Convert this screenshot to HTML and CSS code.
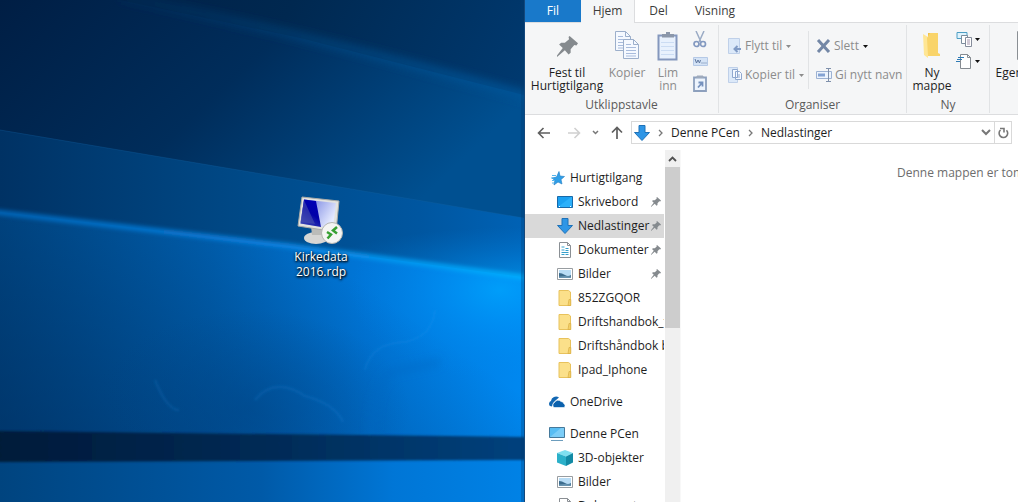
FILE: index.html
```html
<!DOCTYPE html>
<html lang="nb">
<head>
<meta charset="utf-8">
<title>Nedlastinger</title>
<link rel="stylesheet" href="styles.css">
</head>
<body>
<svg class="defs" aria-hidden="true">
  <symbol id="pin" viewBox="0 0 20 20"><path d="M12 0 20 7 18.500 9 16.500 8.500 13 12.500 13 16 11 17.500 7.500 13.500 0 20 0 18.500 5.500 11.500 2 8 4 6.500 7.500 6.500 11.500 3 11 1Z" fill="#858a8e"/></symbol>
  <symbol id="folder" viewBox="0 0 16 16"><path d="M2 .5h9.500l2 1.500v13.500H2z" fill="#fbe08a" stroke="#e8c25c"/><path d="M12 9.500h1.800v6H11z" fill="#f4d067" stroke="#d9ae45" stroke-width=".7"/></symbol>
  <symbol id="down" viewBox="0 0 16 16"><path d="M5 .5h6v7h4.500L8 15.500.5 7.500H5z" fill="#2f96e6" stroke="#1f72b8"/></symbol>
  <symbol id="doc" viewBox="0 0 16 16"><path d="M2.500.5h8l3 3v12h-11z" fill="#fff" stroke="#8a8f94"/><path d="M10.500.5v3h3" fill="none" stroke="#8a8f94"/><path d="M4.500 5h3M8.500 6.500h3M4.500 8h3M8.500 8.500h3M4.500 10.500h7M4.500 12.500h3M8.500 12.500h3" stroke="#35a0cc"/></symbol>
  <symbol id="pic" viewBox="0 0 16 16"><path d="M.5 2.500h15v11H.5z" fill="#fff" stroke="#989da1"/><path d="M2 4h12v8H2z" fill="#b8dcf5"/><path d="M2 7q3 0 6 2t6 0v3H2z" fill="#3c6c8d"/><path d="M2 10.500l6-.5 6 .5V12H2z" fill="#6793b0"/></symbol>
  <symbol id="page" viewBox="0 0 16 20"><path d="M.5.500h10l5 5v14H.5z" fill="#f5f9ff" stroke="#9cafcb"/><path d="M10.500.5v5h5" fill="none" stroke="#9cafcb"/><path d="M3 5.500h5M3 8.500h10M3 11.500h10M3 14.500h10M3 17h10" stroke="#a9bcdc"/></symbol>
  <symbol id="caret" viewBox="0 0 5 3"><path d="M0 0h5L2.500 3z" fill="currentColor"/></symbol>
</svg>

<main class="desktop">
  <svg class="wallpaper" viewBox="0 0 524 502" preserveAspectRatio="none" aria-hidden="true">
    <defs>
      <linearGradient id="sky" x1="0" y1="0" x2="1" y2="0.500"><stop offset="0" stop-color="#001d42"/><stop offset=".45" stop-color="#002850"/><stop offset="1" stop-color="#003f7a"/></linearGradient>
      <linearGradient id="upper" x1="0" y1="0" x2="1" y2=".45"><stop offset="0" stop-color="#001e44"/><stop offset=".5" stop-color="#002d5b"/><stop offset="1" stop-color="#005091"/></linearGradient>
      <linearGradient id="mid" x1="0" y1="0" x2="1" y2="0"><stop offset="0" stop-color="#003264"/><stop offset=".5" stop-color="#004b8a"/><stop offset=".8" stop-color="#0056a0"/><stop offset="1" stop-color="#0062b5"/></linearGradient>
      <linearGradient id="low" x1="0" y1="0" x2="1" y2="0"><stop offset="0" stop-color="#004b8b"/><stop offset=".4" stop-color="#0060b0"/><stop offset=".7" stop-color="#0076d8"/><stop offset="1" stop-color="#0088f0"/></linearGradient>
      <linearGradient id="shade" gradientUnits="userSpaceOnUse" x1="300" y1="240" x2="120" y2="500"><stop offset="0" stop-color="#002450" stop-opacity="0"/><stop offset="1" stop-color="#002450" stop-opacity=".5"/></linearGradient>
      <linearGradient id="floor" x1="0" y1="0" x2="1" y2="0"><stop offset="0" stop-color="#00447f"/><stop offset=".5" stop-color="#005aa8"/><stop offset=".75" stop-color="#0076d6"/><stop offset="1" stop-color="#0082e6"/></linearGradient>
      <linearGradient id="bar" x1="0" y1="0" x2="1" y2="0"><stop offset="0" stop-color="#001a39"/><stop offset=".5" stop-color="#002a55"/><stop offset="1" stop-color="#00427e"/></linearGradient>
      <linearGradient id="ray" x1="0" y1="0" x2="1" y2="0"><stop offset="0" stop-color="#0067bb"/><stop offset=".5" stop-color="#0b82e2"/><stop offset="1" stop-color="#00b0ff"/></linearGradient>
      <linearGradient id="beam" x1="0" y1="0" x2="1" y2="0"><stop offset="0" stop-color="#05457d" stop-opacity=".15"/><stop offset="1" stop-color="#075599"/></linearGradient>
      <radialGradient id="glow"><stop offset="0" stop-color="#00a8ff"/><stop offset=".4" stop-color="#0098fa" stop-opacity=".6"/><stop offset="1" stop-color="#0085e8" stop-opacity="0"/></radialGradient>
      <radialGradient id="dim"><stop offset="0" stop-color="#00407e" stop-opacity=".4"/><stop offset="1" stop-color="#00407e" stop-opacity="0"/></radialGradient>
      <filter id="b2" x="-10%" y="-50%" width="120%" height="200%"><feGaussianBlur stdDeviation="2"/></filter>
      <filter id="b5" x="-20%" y="-50%" width="140%" height="200%"><feGaussianBlur stdDeviation="4"/></filter>
      <filter id="b1"><feGaussianBlur stdDeviation="1"/></filter>
      <clipPath id="above"><path d="M0 130 524 218V277L290 246 0 212z"/></clipPath>
      <clipPath id="below"><path d="M0 212 290 246 524 277V437H0z"/></clipPath>
    </defs>
    <path d="M0 0h524v502H0z" fill="url(#sky)"/>
    <path d="M0 0h120L300 38 524 95v130H0z" fill="url(#upper)"/>
    <path d="M120-3Q300 32 540 100" fill="none" stroke="url(#beam)" stroke-width="9" filter="url(#b5)"/>
    <path d="M0 130 524 218v70H0z" fill="url(#mid)"/>
    <path d="M0 130 524 218" stroke="#1467a8" stroke-opacity=".3"/>
    <g clip-path="url(#above)"><ellipse cx="524" cy="277" rx="220" ry="50" fill="url(#glow)" opacity=".5"/></g>
    <path d="M0 212 290 246 524 277v225H0z" fill="url(#low)"/>
    <path d="M0 212 290 246 524 277v225H0z" fill="url(#shade)"/>
    <ellipse cx="250" cy="410" rx="160" ry="100" fill="url(#dim)"/>
    <g clip-path="url(#below)"><ellipse cx="500" cy="290" rx="150" ry="90" fill="url(#glow)" opacity=".7"/></g>
    <path d="M372 450q-2-60 18-78l50-10" fill="none" stroke="#0068c4" stroke-opacity=".4" stroke-width="8" filter="url(#b5)"/>
    <path d="M-5 212 290 246 530 278" fill="none" stroke="url(#ray)" stroke-width="5" filter="url(#b2)"/>
    <path d="M365 370q6-27 40-28 28-6 30-32M155 380q12 30 24 30M255 400q20-24 50-4 30 8 38 26" fill="none" stroke="#2c9af0" stroke-opacity=".12" stroke-width="3" filter="url(#b1)"/>
    <path d="M0 455h524v47H0z" fill="url(#floor)"/>
    <path d="M-5 431 530 437v23L-5 462z" fill="url(#bar)" filter="url(#b1)"/>
    <path d="M521 0h3v502h-3z" fill="#003a70" opacity=".3"/>
  </svg>

  <button class="shortcut" type="button">
    <svg width="50" height="50" viewBox="0 0 50 50" aria-hidden="true">
      <defs><linearGradient id="scr" x1="0" y1="0" x2="1" y2=".5"><stop offset="0" stop-color="#5868d8"/><stop offset="1" stop-color="#e6ebff"/></linearGradient>
      <linearGradient id="scr2" x1="0" y1="1" x2=".5" y2="0"><stop offset="0" stop-color="#4854b4"/><stop offset=".6" stop-color="#0202a8"/><stop offset="1" stop-color="#0000b4"/></linearGradient></defs>
      <ellipse cx="20" cy="43" rx="12" ry="6" fill="#d6d6d4"/><path d="M15 31h11l1 9H16z" fill="#bbbcb9"/>
      <path d="M6 2 43 6 40 37 2 31z" fill="#e3e3df" stroke="#a9aaa7"/>
      <path d="M8 4.500 40 8 37 33.500 4.500 28.500z" fill="url(#scr)"/><path d="M8 4.500 20 6 25 32 4.500 28.500z" fill="url(#scr2)"/><path d="M8 5 19 29 4.500 27z" fill="#4e58b0" opacity=".55"/>
      <circle cx="36" cy="38" r="10.500" fill="#f5f5f3" stroke="#b5b6b2"/>
      <path d="M31 37l4 2.500-3.500 4M41 32l-4 3.500 4 3" fill="none" stroke="#38a032" stroke-width="2.500"/>
    </svg>
    <span>Kirkedata<br>2016.rdp</span>
  </button>

  <section class="window" aria-label="Nedlastinger">
    <nav class="tabs">
      <button class="tab file" type="button">Fil</button>
      <button class="tab active" type="button">Hjem</button>
      <button class="tab" type="button">Del</button>
      <button class="tab view" type="button">Visning</button>
    </nav>

    <div class="ribbon">
      <div class="group clip">
        <div class="tools">
          <button class="big wide" type="button"><span class="pic"><svg width="21" height="21"><use href="#pin"/></svg></span>Fest til<br>Hurtigtilgang</button>
          <button class="big copy off" type="button"><span class="pic"><svg width="25" height="29" viewBox="0 0 25 29"><use href="#page" width="16" height="20"/><use href="#page" x="8" y="8" width="16" height="20"/></svg></span>Kopier</button>
          <button class="big slim off" type="button"><span class="pic"><svg width="22" height="30" viewBox="0 0 22 30"><path d="M1.500 4.500h18v24h-18z" fill="#e8f1fd" stroke="#8497bd" stroke-width="2"/><path d="M5 6.500V3h4V1h4v2h4v3.500z" fill="#8b97aa"/><path d="M4 11.500h13M4 15.500h13M4 19.500h13M4 23.500h13" stroke="#cbdcf3"/></svg></span>Lim<br>inn</button>
          <div class="small-tools">
            <button type="button" aria-label="Klipp ut"><svg width="14" height="17" viewBox="0 0 14 17"><path d="M3 0l5 11M11 0L6 11" stroke="#9aabc5" stroke-width="1.500"/><circle cx="3.500" cy="13" r="2.500" fill="none" stroke="#8399c0" stroke-width="1.700"/><circle cx="10" cy="13" r="2.500" fill="none" stroke="#8399c0" stroke-width="1.700"/></svg></button>
            <button type="button" aria-label="Kopier bane"><svg width="15" height="9" viewBox="0 0 15 9"><path d="M.5.5h14v8H.5z" fill="#d4e3f6" stroke="#b5c9e6"/><path d="M2 2l1.500 4L5 3l1.500 3L7.500 3M8.500 6h1M10.500 6h1M12.500 6h1" fill="none" stroke="#60789f"/></svg></button>
            <button type="button" aria-label="Lim inn snarvei"><svg width="14" height="17" viewBox="0 0 14 17"><path d="M1 2.500h12V16H1z" fill="#edf4fd" stroke="#8da0bd" stroke-width="1.800"/><path d="M4 3V1h6v2" fill="#9eaabc" stroke="#9eaabc"/><path d="M5 12.500 8.500 8.500M5.500 7.500h4v4" fill="none" stroke="#7591bd" stroke-width="1.800"/></svg></button>
          </div>
        </div>
        <h2>Utklippstavle</h2>
      </div>

      <div class="group organise">
        <div class="tools">
          <div class="pair">
            <button class="line off" type="button"><svg width="14" height="16" viewBox="0 0 14 16"><path d="M.5.500h11v15H.5z" fill="#dce9f9" stroke="#bfd0e9"/><path d="M13 11H7M9.500 8l-3 3 3 3" fill="none" stroke="#819bc5" stroke-width="2"/></svg>Flytt til<svg class="caret"><use href="#caret"/></svg></button>
            <button class="line off" type="button"><svg width="14" height="16" viewBox="0 0 14 16"><path d="M.5.500h9v15h-9z" fill="#dce9f9" stroke="#bfd0e9"/><path d="M4.500 2.500h5v8h-5zM7.500 4.500h4l2 2v6h-6z" fill="#f5f9ff" stroke="#8fa8cf"/><path d="M9 8h3M9 10h3" stroke="#8fa8cf"/></svg>Kopier til<svg class="caret"><use href="#caret"/></svg></button>
          </div>
          <div class="pair second">
            <button class="line off" type="button"><svg width="15" height="14" viewBox="0 0 15 14"><path d="M2 1l11 12M13 1L2 13" stroke="#7387a6" stroke-width="3"/></svg>Slett<svg class="caret dark"><use href="#caret"/></svg></button>
            <button class="line off" type="button"><svg width="16" height="16" viewBox="0 0 16 16"><path d="M.5 4.500h15v7H.5z" fill="#edf4fd" stroke="#9db2d3"/><path d="M2 6.500h7v3H2z" fill="#84a3d3"/><path d="M10 1.500h5M10 14.500h5M12.500 2v12" stroke="#7f90ab"/></svg>Gi nytt navn</button>
          </div>
        </div>
        <h2>Organiser</h2>
      </div>

      <div class="group new">
        <div class="tools">
          <button class="big" type="button"><span class="pic"><svg width="20" height="28" viewBox="0 0 20 28"><path d="M6 2h10v20H6z" fill="#f0c24a"/><path d="M1 3l5 3v21l-4-3z" fill="#ffe694"/><path d="M5 7l3-5h8v20l2 1v2H6z" fill="#f9d46a"/></svg></span>Ny<br>mappe</button>
          <div class="menus">
            <button type="button" aria-label="Nytt element"><svg width="17" height="17" viewBox="0 0 17 17"><path d="M1 1.500h10v6H1z" fill="#dff3fd" stroke="#4d9ec4"/><path d="M5.500 4.500h6v8h-6z" fill="#fff" stroke="#7b8d9d"/><path d="M9.500 6.500h6v9h-6z" fill="#fff" stroke="#858c9b"/><path d="M11 9h3M11 11h3M11 13h3" stroke="#a392aa"/></svg><svg class="caret dark"><use href="#caret"/></svg></button>
            <button type="button" aria-label="Enkel tilgang"><svg width="17" height="17" viewBox="0 0 17 17"><path d="M4.500 1.500h7l3 3v11h-10z" fill="#fff" stroke="#858b91"/><path d="M11.500 1.500v3h3" fill="none" stroke="#858b91"/><path d="M2 4.500h6M1 6.500h5M0 8.500h4" stroke="#2f7bb5"/></svg><svg class="caret dark"><use href="#caret"/></svg></button>
          </div>
        </div>
        <h2>Ny</h2>
      </div>

      <div class="group props">
        <div class="tools">
          <button class="big wide" type="button"><span class="pic"><svg width="22" height="30" viewBox="0 0 22 30"><path d="M.5.500h21v28H.5z" fill="#fff" stroke="#8a8f94"/><path d="M5 9l3 3 6-7" fill="none" stroke="#c75050" stroke-width="2"/></svg></span>Egenskaper</button>
        </div>
      </div>
    </div>

    <div class="navigation">
      <button type="button" aria-label="Tilbake"><svg width="14" height="12" viewBox="0 0 14 12"><path d="M13 6H1.500M6.500 1l-5 5 5 5" fill="none" stroke="#5e5e5e" stroke-width="1.600"/></svg></button>
      <button type="button" aria-label="Frem"><svg width="14" height="12" viewBox="0 0 14 12"><path d="M1 6h11.500M7.500 1l5 5-5 5" fill="none" stroke="#d0d0d0" stroke-width="1.600"/></svg></button>
      <button class="recent" type="button" aria-label="Nylige"><svg width="7" height="5" viewBox="0 0 7 5"><path d="M1 1l2.500 2.500L6 1" fill="none" stroke="#777" stroke-width="1.500"/></svg></button>
      <button class="up" type="button" aria-label="Opp"><svg width="12" height="13" viewBox="0 0 12 13"><path d="M6 13V1.500M1 6.500l5-5 5 5" fill="none" stroke="#5e5e5e" stroke-width="1.700"/></svg></button>
      <div class="address">
        <svg width="16" height="16"><use href="#down"/></svg>
        <svg class="chev" viewBox="0 0 5 8"><path d="M1 1l3 3-3 3" fill="none" stroke="#777" stroke-width="1.300"/></svg>
        <button type="button">Denne PCen</button>
        <svg class="chev" viewBox="0 0 5 8"><path d="M1 1l3 3-3 3" fill="none" stroke="#777" stroke-width="1.300"/></svg>
        <button type="button">Nedlastinger</button>
        <button class="history" type="button" aria-label="Tidligere steder"><svg width="10" height="7" viewBox="0 0 10 7"><path d="M1 1l4 4 4-4" fill="none" stroke="#777" stroke-width="2"/></svg></button>
        <button class="refresh" type="button" aria-label="Oppdater"><svg width="11" height="12" viewBox="0 0 11 12"><path d="M2.500 3A4.300 4.300 0 1 0 8.500 3.200" fill="none" stroke="#777" stroke-width="1.600"/><path d="M2 1.500h4v4" fill="none" stroke="#777" stroke-width="1.600"/></svg></button>
      </div>
    </div>

    <div class="body">
      <aside class="tree">
        <ul>
          <li><a class="top" href="#"><svg viewBox="0 0 16 16"><path d="M10 1.500l1 4.500 4.500.5L12 9.500l1 4.500-4-2-4 3 .8-4.500L3 8l4.500-1z" fill="#2f9fe8" stroke="#1d7ac2" stroke-width=".6"/><path d="M3 5.500h4M2 8h3M3 10.500h3M3 13h2" stroke="#56b6ed"/></svg>Hurtigtilgang</a></li>
          <li><a href="#"><svg viewBox="0 0 16 16"><path d="M.5 2.500h15v11H.5z" fill="#1ba1f2" stroke="#1769a9"/><path d="M1 13L14 3h1v10z" fill="#2bb0fa"/><path d="M2 12.500h1M13 12.500h1" stroke="#fff"/></svg><span>Skrivebord</span><svg class="pin"><use href="#pin"/></svg></a></li>
          <li><a class="selected" href="#"><svg><use href="#down"/></svg><span>Nedlastinger</span><svg class="pin"><use href="#pin"/></svg></a></li>
          <li><a href="#"><svg><use href="#doc"/></svg><span>Dokumenter</span><svg class="pin"><use href="#pin"/></svg></a></li>
          <li><a href="#"><svg><use href="#pic"/></svg><span>Bilder</span><svg class="pin"><use href="#pin"/></svg></a></li>
          <li><a href="#"><svg><use href="#folder"/></svg>852ZGQOR</a></li>
          <li><a href="#"><svg><use href="#folder"/></svg>Driftshandbok_felles</a></li>
          <li><a href="#"><svg><use href="#folder"/></svg>Driftshåndbok bilder</a></li>
          <li><a href="#"><svg><use href="#folder"/></svg>Ipad_Iphone</a></li>
        </ul>
        <ul>
          <li><a class="top" href="#"><svg viewBox="0 0 16 16"><path d="M1 12a3 3 0 0 1 1-5 5 5 0 0 1 8-3.500L7 6l-3 3-1 3.500z" fill="#1368b3"/><path d="M5 13.500a3 3 0 0 1 .5-5A4 4 0 0 1 12 7.500a3 3 0 0 1 3 2.500 2 2 0 0 1 0 3.500z" fill="#0b61ad" stroke="#fff" stroke-width=".6"/></svg>OneDrive</a></li>
        </ul>
        <ul>
          <li><a class="top" href="#"><svg viewBox="0 0 16 16"><path d="M.5 1.500h15v10H.5z" fill="#58bdf3" stroke="#45799b"/><path d="M1 11L12 2h3v9z" fill="#7ccdf7"/><path d="M2 14.500h12" stroke="#6c9dbd"/></svg>Denne PCen</a></li>
          <li><a href="#"><svg viewBox="0 0 16 16"><path d="M8 0l8 3-7 3.500L0 3z" fill="#7fe0f0"/><path d="M0 3l9 3.500V16l-9-3.500z" fill="#2bb0c9"/><path d="M9 6.500L16 3v9.500L9 16z" fill="#128aa5"/></svg>3D-objekter</a></li>
          <li><a href="#"><svg><use href="#pic"/></svg>Bilder</a></li>
          <li><a href="#"><svg><use href="#doc"/></svg>Dokumenter</a></li>
        </ul>
      </aside>
      <div class="scrollbar">
        <button type="button" aria-label="Rull opp"><svg width="9" height="6" viewBox="0 0 9 6"><path d="M1 5l3.500-3.500L8 5" fill="none" stroke="#505050" stroke-width="1.800"/></svg></button>
        <div class="thumb"></div>
      </div>
      <div class="content"><p>Denne mappen er tom.</p></div>
    </div>
  </section>
</main>
</body>
</html>
```
FILE: styles.css
```css
* { box-sizing: border-box; }
body {
  margin: 0;
  font: 12px/16px "Segoe UI", "Open Sans", "Noto Sans", sans-serif;
  color: #1e1e1e;
}
button {
  margin: 0; padding: 0; border: 0; background: none;
  font: inherit; color: inherit;
}
svg { display: block; flex: none; }
ul, h2, p { margin: 0; padding: 0; list-style: none; }
.defs { position: absolute; width: 0; height: 0; }

.desktop { position: relative; height: 100vh; overflow: hidden; background: #003f7a; }
.wallpaper { position: absolute; left: 0; top: 0; width: 524px; height: 100%; }
.shortcut {
  position: absolute; left: 283px; top: 195px; width: 76px;
  display: flex; flex-direction: column; align-items: center;
  color: #fff; line-height: 15px;
  text-shadow: 1px 1px 2px #000, 0 1px 3px #000;
}
.shortcut span { margin-top: 4px; }

.window {
  position: absolute; left: 524px; right: 0; top: 0; bottom: 0;
  display: flex; flex-direction: column; overflow: hidden;
  background: #fff; border-left: 1px solid #14487c;
}

.tabs { display: flex; height: 23px; flex: none; border-bottom: 1px solid #dcdddf; line-height: 22px; }
.tab { width: 47px; height: 22px; color: #3c3c3c; }
.tab.file { width: 56px; background: #1979ca; color: #fff; }
.tab.active { width: 54px; height: 23px; padding-bottom: 1px; background: #f5f6f7; border-right: 1px solid #dcdddf; }
.tab.view { width: 66px; }

.ribbon { display: flex; height: 92px; flex: none; background: #f5f6f7; border-bottom: 1px solid #dcdddf; overflow: hidden; }
.group { display: flex; flex-direction: column; flex: none; margin: 2px 0 1px; border-right: 1px solid #e1e3e5; }
.group h2 { font-size: 12px; font-weight: 400; text-align: center; color: #5a5a5a; line-height: 16px; margin-top: auto; }
.tools { display: flex; height: 72px; padding-top: 6px; }
.clip { width: 194px; }
.organise { width: 188px; }
.new { width: 83px; }
.props { width: 84px; }
.big { width: 48px; display: block; line-height: 13px; text-align: center; white-space: nowrap; align-self: flex-start; }
.big.wide { width: 76px; }
.big.copy { width: 44px; }
.big.slim { width: 38px; }
.clip .tools { padding-left: 4px; }
.new .tools { padding-left: 1px; }
.off { color: #8c8c8c; }
.pic { display: flex; height: 35px; justify-content: center; }
.clip .wide .pic { padding-top: 5px; }
.small-tools { display: flex; flex-direction: column; align-items: center; gap: 9px; width: 26px; }
.menus { display: flex; flex-direction: column; gap: 5px; }
.menus button { display: flex; align-items: center; gap: 1px; }
.pair { display: flex; flex-direction: column; gap: 13px; width: 90px; height: 58px; padding: 7px 0 0 9px; border-right: 1px solid #e1e3e5; }
.pair.second { width: 97px; padding-left: 7px; border: 0; }
.line { display: flex; align-items: center; gap: 3px; height: 16px; white-space: nowrap; }
.caret { width: 5px; height: 3px; margin-left: 1px; }
.caret.dark { color: #111; }

.navigation { display: flex; align-items: center; height: 35px; flex: none; padding: 0 6px 0 12px; }
.navigation > button { display: flex; justify-content: center; width: 14px; margin-right: 16px; }
.navigation > button.recent { width: 8px; margin-right: 12px; }
.navigation > button.up { width: 12px; margin-right: 8px; }
.navigation > button[aria-label="Frem"] { margin-right: 10px; }
.address { flex: 1; display: flex; align-items: center; height: 23px; padding-left: 2px; border: 1px solid #d9d9d9; }
.address .chev { width: 5px; height: 8px; margin: 0 8px; }
.address .history { width: 16px; margin-left: auto; display: flex; justify-content: center; }
.address .refresh { display: flex; align-items: center; justify-content: center; width: 17px; height: 21px; border-left: 1px solid #d9d9d9; }

.body { display: flex; flex: 1; min-height: 0; }
.tree { width: 140px; padding-top: 16px; overflow: hidden; flex: none; }
.tree ul { margin-bottom: 8px; }
.tree a {
  display: flex; align-items: center; height: 24px; margin-right: 1px; padding-left: 32px;
  color: #1e1e1e; text-decoration: none; white-space: nowrap; overflow: hidden;
}
.tree a.top { padding-left: 24px; }
.tree .selected { background: #d9d9d9; }
.tree svg { width: 16px; height: 16px; margin-right: 5px; }
.tree .pin { width: 10px; height: 10px; margin: 0 3px 0 auto; }
.scrollbar { width: 16px; flex: none; background: #f0f0f0; border-right: 1px solid #f8f8f8; }
.scrollbar button { display: flex; width: 15px; height: 17px; align-items: center; justify-content: center; }
.thumb { width: 15px; height: 161px; background: #cdcdcd; }
.content { flex: 1; min-width: 0; overflow: hidden; padding: 15px 0 0 216px; color: #6d6d6d; white-space: nowrap; }
```
